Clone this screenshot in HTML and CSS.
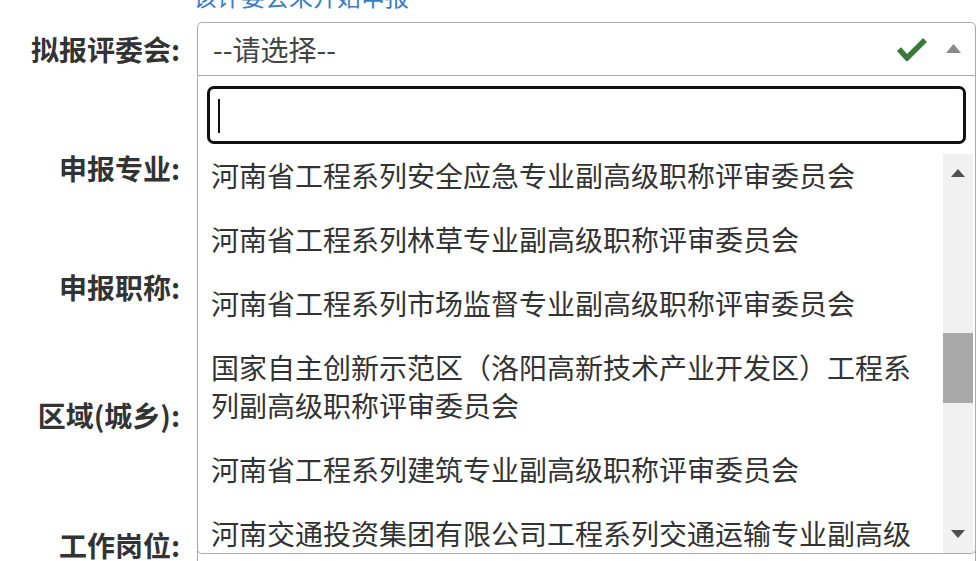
FILE: index.html
```html
<!DOCTYPE html>
<html>
<head>
	<meta charset="utf-8">
	<title>申报信息</title>
	<link rel="stylesheet" href="styles.css">
</head>
<body>
	<div class="form">
		<div class="notice">该评委会未开始申报</div>

		<div class="row">
			<label class="label">拟报评委会:</label>
			<div class="select-wrap">
				<div class="select open">
					<span class="select-text">--请选择--</span>
					<svg class="ok" width="30" height="24" viewBox="0 0 30 24">
						<polyline points="2,12 10,21 28,3" fill="none" stroke="#3b7a3d" stroke-width="5.5"/>
					</svg>
					<svg class="caret" width="15" height="9" viewBox="0 0 15 9">
						<polygon points="0,9 7.5,0 15,9" fill="#888"/>
					</svg>
				</div>

				<!-- открытый список -->
				<div class="dropdown">
					<div class="search"><span class="cursor"></span></div>
					<div class="list">
						<ul class="options">
							<li>河南省工程系列安全应急专业副高级职称评审委员会</li>
							<li>河南省工程系列林草专业副高级职称评审委员会</li>
							<li>河南省工程系列市场监督专业副高级职称评审委员会</li>
							<li>国家自主创新示范区（洛阳高新技术产业开发区）工程系列副高级职称评审委员会</li>
							<li>河南省工程系列建筑专业副高级职称评审委员会</li>
							<li>河南交通投资集团有限公司工程系列交通运输专业副高级职称评审委员会</li>
						</ul>
						<div class="scrollbar">
							<div class="sb-btn"><span class="tri-up"></span></div>
							<div class="sb-track">
								<div class="sb-thumb"></div>
							</div>
							<div class="sb-btn"><span class="tri-down"></span></div>
						</div>
					</div>
				</div>
			</div>
		</div>

		<div class="row">
			<label class="label">申报专业:</label>
			<div class="select"><span class="select-text"></span></div>
		</div>

		<div class="row row-tall">
			<label class="label">申报职称:</label>
			<div class="select"><span class="select-text"></span></div>
		</div>

		<div class="row row-taller">
			<label class="label">区域(城乡):</label>
			<div class="select"><span class="select-text"></span></div>
		</div>

		<div class="row">
			<label class="label">工作岗位:</label>
			<div class="select"><span class="select-text"></span></div>
		</div>
	</div>
</body>
</html>
```

FILE: styles.css
```css
body {
	margin: 0;
	background: #fff;
	font-family: "Noto Sans CJK SC", "Noto Sans", sans-serif;
	color: #333;
	overflow: hidden;
}

.form {
	width: 979px;
}

.notice {
	margin-top: -20px;
	margin-bottom: 10px;
	padding-left: 193px;
	font-size: 24px;
	line-height: 32px;
	color: #3a7cc4;
}

.row {
	display: grid;
	grid-template-columns: 180px 779px;
	column-gap: 17px;
	align-items: start;
	margin-bottom: 65px;
}

.row-tall {
	margin-bottom: 74px;
}

.row-taller {
	margin-bottom: 76px;
}

.label {
	text-align: right;
	font-size: 28px;
	font-weight: 700;
	line-height: 54px;
	color: #333;
	white-space: nowrap;
}

.select-wrap {
	position: relative;
}

.select {
	display: flex;
	align-items: center;
	box-sizing: border-box;
	height: 54px;
	padding: 0 14px 0 15px;
	border: 1px solid #aaa;
	border-radius: 5px;
	background: #fff;
}

.select.open {
	border-radius: 5px 5px 0 0;
}

.select-text {
	flex: 1;
	font-size: 28px;
	color: #444;
	white-space: nowrap;
}

.ok {
	margin-right: 19px;
}

.caret {
	margin-top: -2px;
}

.dropdown {
	position: absolute;
	top: 54px;
	left: 0;
	z-index: 2;
	box-sizing: border-box;
	width: 779px;
	padding: 10px 9px 0 9px;
	border: 1px solid #aaa;
	border-top: none;
	border-radius: 0 0 5px 5px;
	background: #fff;
}

.search {
	box-sizing: border-box;
	height: 58px;
	padding: 10px 8px;
	border: 3px solid #111;
	border-radius: 7px;
}

.cursor {
	display: block;
	width: 2px;
	height: 34px;
	background: #111;
}

.list {
	display: flex;
	height: 399px;
	margin: 10px -9px 0 -9px;
	overflow: hidden;
}

.options {
	flex: 1;
	margin: -11px 0 0 0;
	padding: 0;
	list-style: none;
	overflow: hidden;
}

.options li {
	padding: 13px 20px 13px 13px;
	font-size: 28px;
	line-height: 38px;
	color: #333;
}

.scrollbar {
	display: flex;
	flex-direction: column;
	width: 30px;
	margin-right: 2px;
	background: #f1f1f1;
}

.sb-btn {
	display: flex;
	align-items: center;
	justify-content: center;
	height: 38px;
}

.tri-up,
.tri-down {
	width: 0;
	height: 0;
	border-left: 7px solid transparent;
	border-right: 7px solid transparent;
}

.tri-up {
	border-bottom: 8px solid #505050;
}

.tri-down {
	border-top: 8px solid #505050;
}

.sb-track {
	flex: 1;
	padding-top: 141px;
}

.sb-thumb {
	height: 70px;
	background: #a8a8a8;
}
```
